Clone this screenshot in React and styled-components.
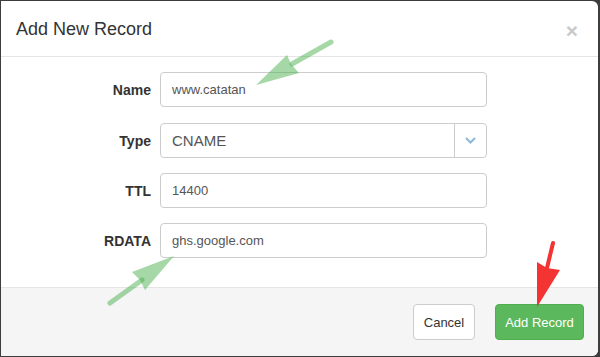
import React from "react";
import styled, { createGlobalStyle } from "styled-components";

const Global = createGlobalStyle`
  html, body { margin: 0; padding: 0; background: #3d3d3d; }
  body { font-family: "Liberation Sans", Arial, sans-serif; }
  * { box-sizing: border-box; }
`;

const Stage = styled.div`
  position: relative;
  width: 600px;
  height: 357px;
  padding: 1px 2px 1px 1px;
  overflow: hidden;
`;

const Modal = styled.div`
  background: #fff;
  border-radius: 0 6px 6px 0;
  height: 355px;
  display: flex;
  flex-direction: column;
  overflow: hidden;
`;

const Header = styled.div`
  height: 56px;
  border-bottom: 1px solid #e5e5e5;
  display: flex;
  align-items: center;
  justify-content: space-between;
  padding: 0 20px 0 15px;
`;

const Title = styled.h4`
  margin: 0;
  font-size: 18px;
  font-weight: normal;
  color: #333;
  padding-top: 1px;
`;

const Close = styled.span`
  font-size: 21px;
  font-weight: bold;
  color: #c9c9c9;
  line-height: 1;
  margin-top: 4px;
`;

const Body = styled.div`
  padding: 15px 0 15px;
  border-bottom: 1px solid #e5e5e5;
`;

const Row = styled.div`
  display: flex;
  align-items: center;
  height: 35px;
  margin-bottom: ${(p) => (p.$gap ? p.$gap : 15)}px;
`;

const Label = styled.label`
  width: 159px;
  padding-right: 9px;
  text-align: right;
  font-size: 14px;
  font-weight: bold;
  color: #333;
`;

const Field = styled.div`
  width: 327px;
  height: 35px;
  border: 1px solid #ccc;
  border-radius: 4px;
  display: flex;
  align-items: center;
  padding-left: 11px;
  font-size: 13px;
  color: #555;
`;

const SelectBox = styled.div`
  width: 327px;
  height: 35px;
  border: 1px solid #ccc;
  border-radius: 4px;
  display: flex;
  align-items: stretch;
  font-size: 15px;
  color: #555;
`;

const SelectValue = styled.div`
  flex: 1;
  display: flex;
  align-items: center;
  padding-left: 11px;
  border-right: 1px solid #ccc;
`;

const Addon = styled.div`
  width: 31px;
  display: flex;
  align-items: center;
  justify-content: center;
`;

const Footer = styled.div`
  flex: 1;
  background: #f5f5f5;
  display: flex;
  justify-content: flex-end;
  align-items: flex-start;
  gap: 20px;
  padding: 16px 14px 0 0;
`;

const Button = styled.button`
  height: 36px;
  width: ${(p) => p.$w}px;
  padding: 0;
  border-radius: 4px;
  font-family: "Liberation Sans", Arial, sans-serif;
  font-size: 13px;
  border: 1px solid ${(p) => (p.$primary ? "#4cae4c" : "#ccc")};
  background: ${(p) => (p.$primary ? "#5cb85c" : "#fff")};
  color: ${(p) => (p.$primary ? "#fff" : "#333")};
`;

const Overlay = styled.svg`
  position: absolute;
  left: 0;
  top: 0;
  pointer-events: none;
`;

export default function App() {
  return (
    <>
      <Global />
      <Stage>
        <Modal>
          <Header>
            <Title>Add New Record</Title>
            <Close>×</Close>
          </Header>
          <Body>
            <Row $gap={16}>
              <Label>Name</Label>
              <Field>www.catatan</Field>
            </Row>
            <Row>
              <Label>Type</Label>
              <SelectBox>
                <SelectValue>CNAME</SelectValue>
                <Addon>
                  <svg width="11" height="7" viewBox="0 0 11 7">
                    <path d="M1 1 L5.5 5.5 L10 1" fill="none" stroke="#8fb8d8" strokeWidth="2" />
                  </svg>
                </Addon>
              </SelectBox>
            </Row>
            <Row>
              <Label>TTL</Label>
              <Field>14400</Field>
            </Row>
            <Row $gap={14}>
              <Label>RDATA</Label>
              <Field>ghs.google.com</Field>
            </Row>
          </Body>
          <Footer>
            <Button $w={62}>Cancel</Button>
            <Button $primary $w={89}>Add Record</Button>
          </Footer>
        </Modal>
        <Overlay width="600" height="357" viewBox="0 0 600 357">
          <g fill="rgba(76,175,80,0.5)" stroke="none">
            <line x1="331" y1="42" x2="292" y2="64" stroke="rgba(76,175,80,0.5)" strokeWidth="5" strokeLinecap="round" />
            <polygon points="256,85 287,55 291,64 299,73" />
            <line x1="110" y1="303" x2="142" y2="280" stroke="rgba(76,175,80,0.5)" strokeWidth="5" strokeLinecap="round" />
            <polygon points="174,256 132,272 140,280 145,290" />
          </g>
          <g fill="#f43333">
            <line x1="553" y1="243" x2="547" y2="268" stroke="#f43333" strokeWidth="4" strokeLinecap="round" />
            <polygon points="537,307 537,262 547,268 560,270" />
          </g>
        </Overlay>
      </Stage>
    </>
  );
}
